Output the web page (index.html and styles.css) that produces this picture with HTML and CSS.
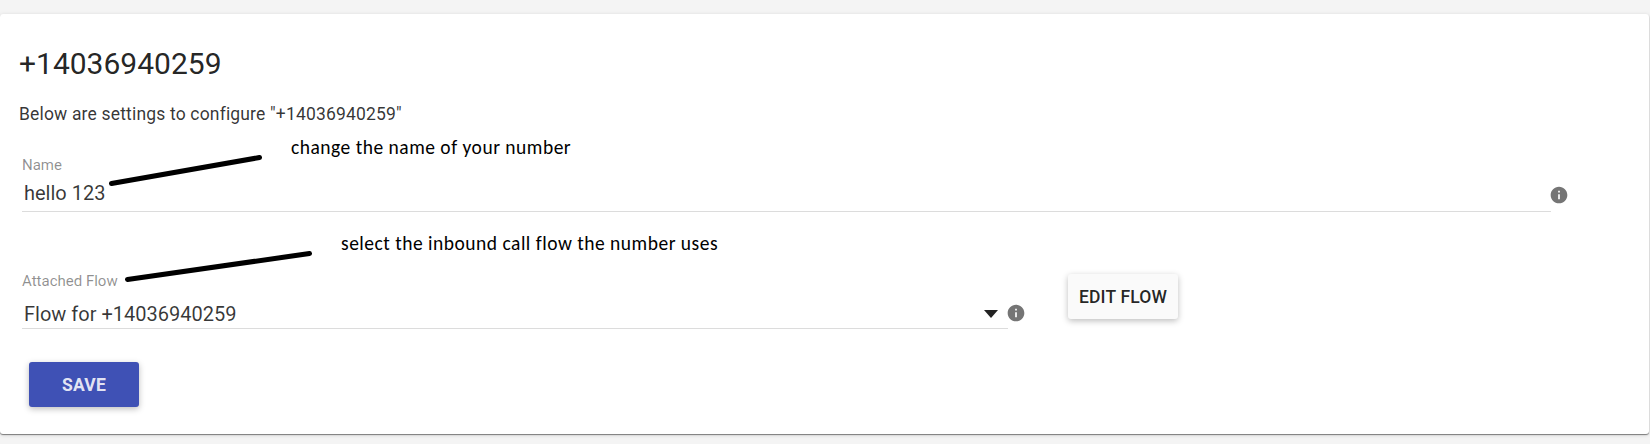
FILE: index.html
```html
<!DOCTYPE html>
<html lang="en">
<head>
<meta charset="utf-8">
<title>Number settings</title>
<link rel="stylesheet" href="styles.css">
</head>
<body>
<main class="card">
  <h1 class="title">+14036940259</h1>
  <p class="intro">Below are settings to configure "+14036940259"</p>
  <div class="row row-name">
    <div class="field field-name">
      <label class="label">Name</label>
      <div class="value">hello 123</div>
    </div>
    <svg class="info" viewBox="0 0 24 24"><path d="M12 2C6.480 2 2 6.480 2 12s4.480 10 10 10 10-4.480 10-10S17.520 2 12 2zm1 15h-2v-6h2v6zm0-8h-2V7h2v2z"/></svg>
  </div>
  <div class="row row-flow">
    <div class="field field-flow">
      <label class="label">Attached Flow</label>
      <div class="value select"><span>Flow for +14036940259</span><span class="caret"></span></div>
    </div>
    <svg class="info" viewBox="0 0 24 24"><path d="M12 2C6.480 2 2 6.480 2 12s4.480 10 10 10 10-4.480 10-10S17.520 2 12 2zm1 15h-2v-6h2v6zm0-8h-2V7h2v2z"/></svg>
    <button class="button edit">EDIT FLOW</button>
  </div>
  <button class="button save">SAVE</button>
</main>
<svg class="strokes" width="1650" height="444"><path d="M111.500 183.500L259.500 157.500M127.500 279.500L309.500 253.500"/></svg>
<div class="note note-name">change the name of your number</div>
<div class="note note-flow">select the inbound call flow the number uses</div>
</body>
</html>
```
FILE: styles.css
```css
* { box-sizing: border-box; }
body {
  margin: 0;
  padding-top: 14px;
  height: 444px;
  overflow: hidden;
  background: #f4f4f4;
  font-family: Roboto, "Liberation Sans", sans-serif;
  color: rgba(0, 0, 0, .87);
}
.card {
  width: 1649px;
  height: 420px;
  padding: 32px 0 0 19px;
  background: #fff;
  border-radius: 3px;
  box-shadow: 0 1px 4px rgba(0, 0, 0, .14), 0 1px 1px rgba(0, 0, 0, .45);
}
.title {
  margin: 0;
  font-size: 30px;
  line-height: 35px;
  font-weight: 400;
}
.intro {
  margin: 23px 0 0;
  font-size: 17.5px;
  line-height: 21px;
  letter-spacing: .17px;
  color: rgba(0, 0, 0, .8);
}
.row {
  display: flex;
  margin-left: 3px;
}
.row-name { margin-top: 31px; }
.row-flow { margin-top: 60px; }
.field { border-bottom: 1px solid #dcdcdc; }
.field-name { width: 1529px; height: 56px; }
.field-flow { width: 986px; height: 57px; }
.label {
  display: block;
  font-size: 15px;
  line-height: 18px;
  color: rgba(0, 0, 0, .44);
}
.value {
  margin-top: 7px;
  padding-left: 2px;
  font-size: 20px;
  line-height: 24px;
  color: rgba(0, 0, 0, .78);
}
.select {
  display: flex;
  justify-content: space-between;
  align-items: center;
  margin-top: 12px;
  padding-right: 10px;
}
.caret {
  border: solid transparent;
  border-width: 8px 7px 0;
  border-top-color: #222;
}
.info {
  width: 20px;
  height: 20px;
  margin: 29px 0 0 -2px;
  fill: #757575;
}
.row-flow .info { margin-top: 31px; }
.button {
  display: block;
  width: 110px;
  height: 45px;
  padding: 0;
  border: 0;
  border-radius: 3px;
  font: 500 17.5px/45px Roboto, "Liberation Sans", sans-serif;
  letter-spacing: .18px;
  box-shadow: 0 2px 6px rgba(0, 0, 0, .26);
}
.edit {
  margin: 2px 0 0 42px;
  padding-top: 1px;
  background: #fafafa;
  color: rgba(0, 0, 0, .87);
}
.save {
  margin: 33px 0 0 10px;
  padding-top: 1px;
  background: #3f51b5;
  color: rgba(255, 255, 255, .87);
  font-weight: 700;
}
.strokes {
  position: absolute;
  left: 0;
  top: 0;
  fill: none;
  stroke: #000;
  stroke-width: 5px;
  stroke-linecap: round;
}
.note {
  position: absolute;
  font: 19.500px/24px Carlito, Lato, sans-serif;
  letter-spacing: .5px;
  color: #000;
  white-space: nowrap;
}
.note-name { left: 291px; top: 135px; }
.note-flow { left: 341px; top: 231px; }
```
